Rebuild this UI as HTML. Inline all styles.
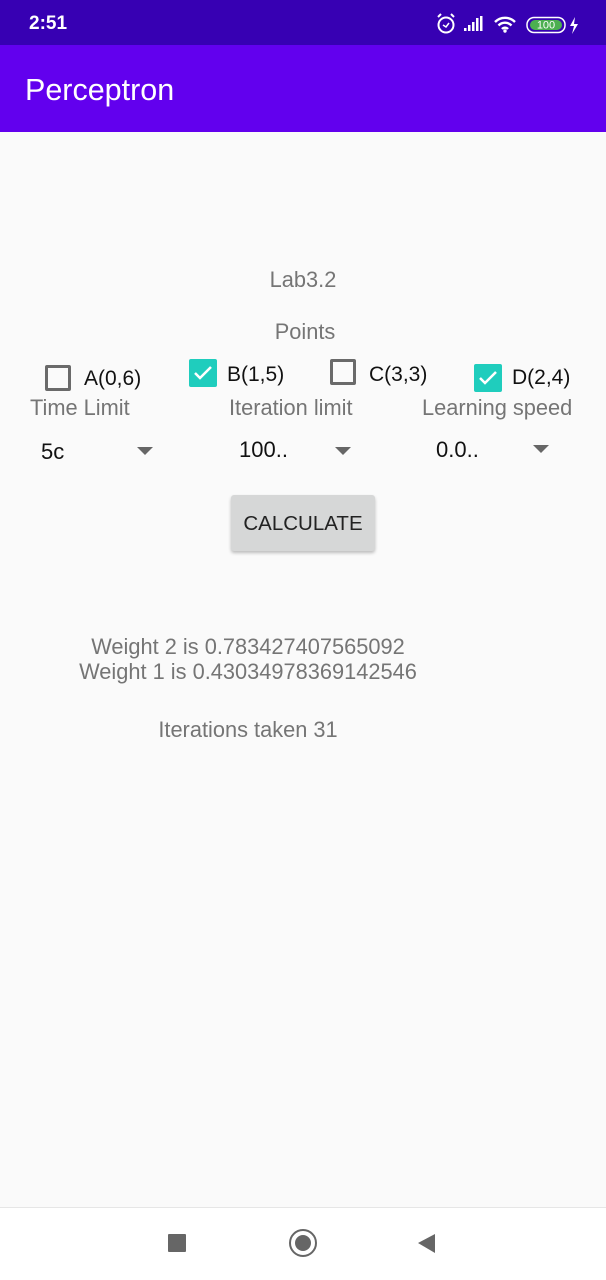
<!DOCTYPE html>
<html><head><meta charset="utf-8"><style>
*{margin:0;padding:0;box-sizing:border-box}
body{width:606px;height:1280px;background:#fafafa;font-family:"Liberation Sans",sans-serif;position:relative;overflow:hidden}
.a{position:absolute;white-space:nowrap}
.g{color:#757575;font-size:21.8px}
.k{color:#111;font-size:21px}
.cb{position:absolute;width:26px;height:26px;border:3px solid #6a6a6a;border-radius:2px}
.cc{position:absolute;width:28px;height:28px;background:#1fcdbd;border-radius:2px}
.tri{position:absolute;width:0;height:0;border-left:8px solid transparent;border-right:8px solid transparent;border-top:8px solid #666}
</style></head><body>
<div class="a" style="left:0;top:0;width:606px;height:45px;background:#3700b3"></div>
<div class="a" style="left:29px;top:13px;color:#fff;font-size:19px;font-weight:bold">2:51</div>
<svg class="a" style="left:435px;top:11px" width="150" height="26" viewBox="0 0 150 24">
<circle cx="11" cy="13" r="7.5" fill="none" stroke="#fff" stroke-width="2"/><path d="M8 13l3 2 3-4" stroke="#fff" fill="none" stroke-width="1.5"/><path d="M3 5l3-3M19 5l-3-3" stroke="#fff" stroke-width="2"/>
<rect x="29" y="16" width="2.5" height="3" fill="#fff"/><rect x="33" y="13" width="2.5" height="6" fill="#fff"/><rect x="37" y="10" width="2.5" height="9" fill="#fff"/><rect x="41" y="6" width="2.5" height="13" fill="#fff"/><rect x="45" y="4" width="2.5" height="15" fill="#fff"/>
<path d="M60 10a14 14 0 0 1 20 0M63.5 13.5a9 9 0 0 1 13 0M67 17a4 4 0 0 1 6 0" stroke="#fff" stroke-width="2.4" fill="none"/><circle cx="70" cy="19" r="1.7" fill="#fff"/>
<rect x="92" y="5.5" width="38" height="15" rx="7" fill="none" stroke="#fff" stroke-width="1.5"/><rect x="95" y="8" width="32" height="10" rx="5" fill="#4caf50"/><text x="111" y="16.5" font-size="11" fill="#fff" text-anchor="middle" font-family="Liberation Sans">100</text>
<path d="M140 5l-5 9h4l-2 8 6-10h-4z" fill="#fff"/>
</svg>
<div class="a" style="left:0;top:45px;width:606px;height:87px;background:#6200ee"></div>
<div class="a" style="left:25px;top:73px;color:#fff;font-size:30.5px">Perceptron</div>

<div class="a g" style="left:0;width:606px;text-align:center;top:267px">Lab3.2</div>
<div class="a g" style="left:0;width:610px;text-align:center;top:319px">Points</div>

<div class="cb" style="left:45px;top:365px"></div><div class="a k" style="left:84px;top:367px">A(0,6)</div>
<div class="cc" style="left:189px;top:359px"><svg width="28" height="28"><path d="M6 14l5 5 11-11" stroke="#fff" stroke-width="2.5" fill="none"/></svg></div><div class="a k" style="left:227px;top:363px">B(1,5)</div>
<div class="cb" style="left:330px;top:359px"></div><div class="a k" style="left:369px;top:363px">C(3,3)</div>
<div class="cc" style="left:474px;top:364px"><svg width="28" height="28"><path d="M6 14l5 5 11-11" stroke="#fff" stroke-width="2.5" fill="none"/></svg></div><div class="a k" style="left:512px;top:366px">D(2,4)</div>

<div class="a g" style="left:30px;top:395px">Time Limit</div>
<div class="a g" style="left:229px;top:395px">Iteration limit</div>
<div class="a g" style="left:422px;top:395px">Learning speed</div>

<div class="a k" style="left:41px;top:439px;font-size:22px">5c</div><div class="tri" style="left:137px;top:447px"></div>
<div class="a k" style="left:239px;top:437px;font-size:22px">100..</div><div class="tri" style="left:335px;top:447px"></div>
<div class="a k" style="left:436px;top:437px;font-size:22px">0.0..</div><div class="tri" style="left:533px;top:445px"></div>

<div class="a" style="left:231px;top:495px;width:144px;height:56px;background:#d6d7d7;border-radius:3px;box-shadow:0 2px 3px rgba(0,0,0,.25)"></div>
<div class="a" style="left:231px;top:512px;width:144px;text-align:center;font-size:20.5px;color:#222">CALCULATE</div>

<div class="a g" style="left:0;width:496px;text-align:center;top:634px">Weight 2 is 0.783427407565092</div>
<div class="a g" style="left:0;width:496px;text-align:center;top:659px">Weight 1 is 0.43034978369142546</div>
<div class="a g" style="left:0;width:496px;text-align:center;top:717px">Iterations taken 31</div>

<div class="a" style="left:0;top:1207px;width:606px;height:73px;background:#fff;border-top:1px solid #e6e6e6"></div>
<div class="a" style="left:168px;top:1234px;width:18px;height:18px;background:#666;border-radius:1px"></div>
<div class="a" style="left:289px;top:1229px;width:28px;height:28px;border:2.5px solid #666;border-radius:50%"></div>
<div class="a" style="left:295px;top:1235px;width:16px;height:16px;background:#666;border-radius:50%"></div>
<svg class="a" style="left:417px;top:1233px" width="20" height="22"><path d="M1 10L18 1V20z" fill="#666"/></svg>
</body></html>
